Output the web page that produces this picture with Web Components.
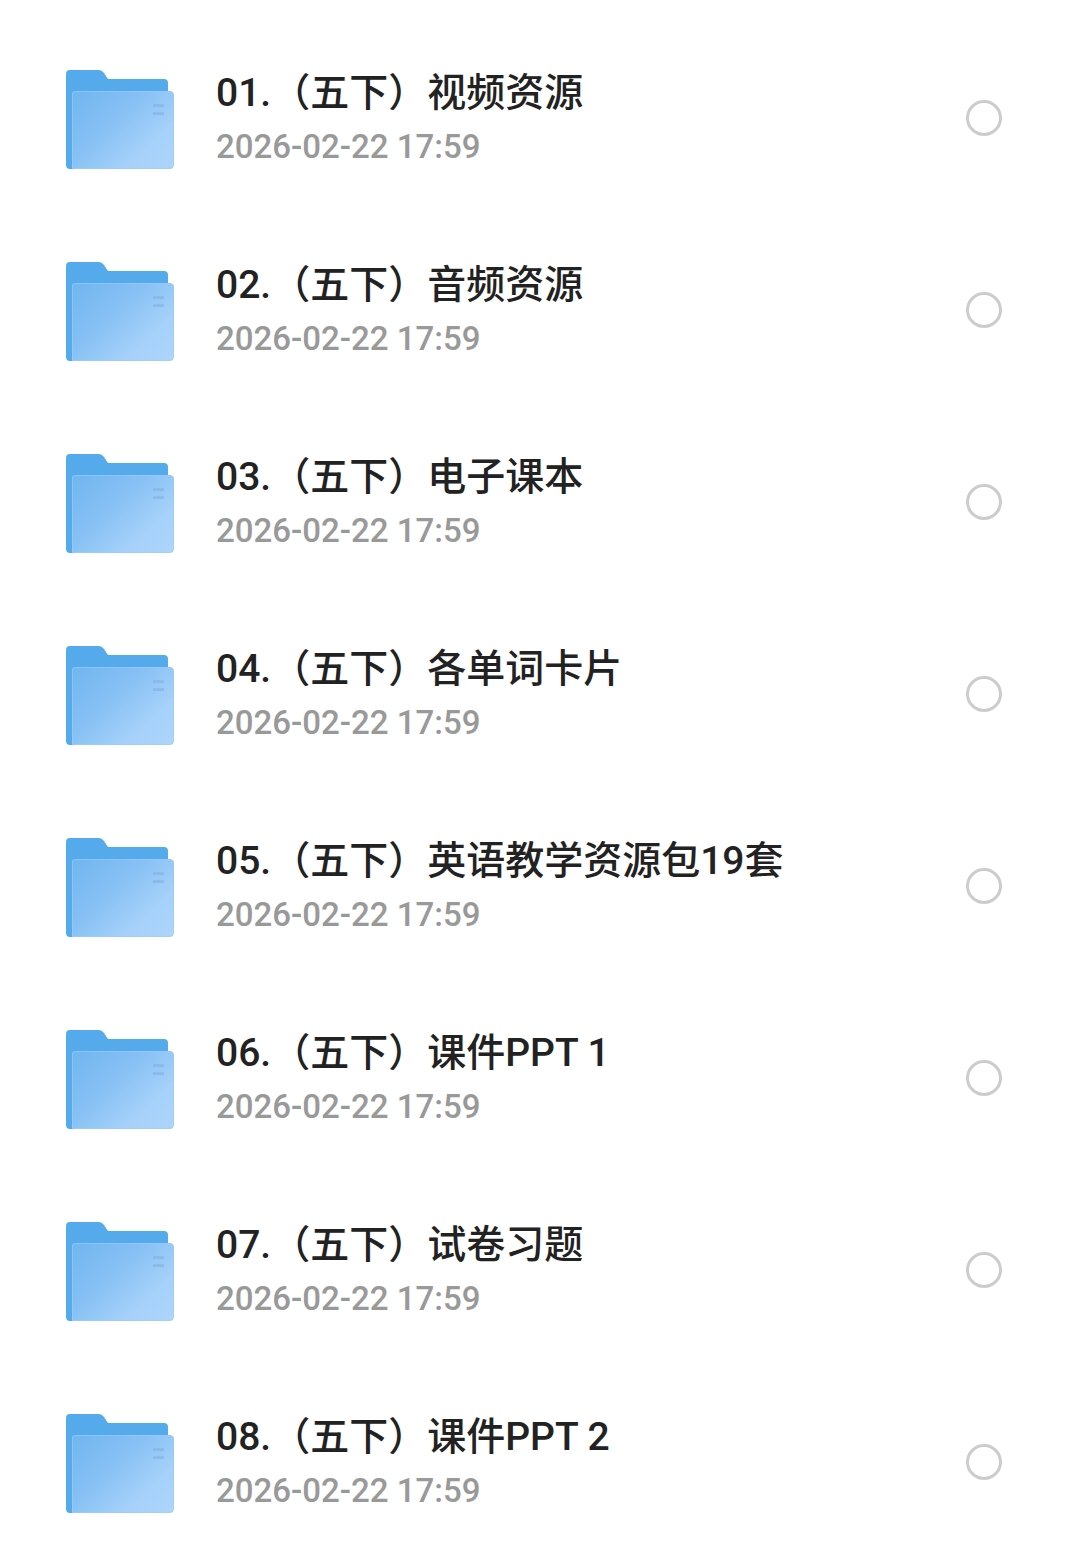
<!DOCTYPE html>
<html lang="zh-CN">
<head>
<meta charset="UTF-8">
<meta name="viewport" content="width=device-width, initial-scale=1">
<title>五下资源</title>
<style>
  body {
    margin: 0;
    background-color: #fff;
    font-family: Roboto, "Noto Sans CJK SC", sans-serif;
  }
</style>
</head>
<body>
<file-list></file-list>

<script>
class FolderIcon extends HTMLElement {
  constructor() {
    super();
    this.attachShadow({ mode: 'open' });
    this.shadowRoot.innerHTML = `
      <style>
        :host {
          display: block;
          width: 108px;
          height: 100px;
        }
        svg {
          display: block;
        }
      </style>
      <svg width="108" height="100" viewBox="0 0 108 100" aria-hidden="true">
        <defs>
          <linearGradient id="front" x1="0" y1="0.1" x2="1" y2="0.9">
            <stop offset="0" stop-color="#72b7f0"/>
            <stop offset="0.4" stop-color="#88c1f4"/>
            <stop offset="0.75" stop-color="#a5d1fa"/>
            <stop offset="1" stop-color="#acd4fb"/>
          </linearGradient>
          <linearGradient id="edge" x1="0" y1="0" x2="1" y2="1">
            <stop offset="0" stop-color="#86c5f6"/>
            <stop offset="1" stop-color="#a6d0f9"/>
          </linearGradient>
        </defs>
        <path fill="#55aaec" d="M4 0H33Q36 0 38 3L42 9H98Q102 9 102 13V99H4Q0 99 0 95V4Q0 0 4 0Z"/>
        <path fill="url(#front)" stroke="url(#edge)" d="M8.500 21.500H104Q107.500 21.500 107.500 25V95Q107.500 98.500 104 98.500H6.500V23.500Q6.500 21.500 8.500 21.500Z"/>
        <path fill="#84b8ea" fill-opacity="0.8" d="M87 34H98V37H87ZM87 42H98V45H87Z"/>
      </svg>
    `;
  }
}

class FileRow extends HTMLElement {
  constructor() {
    super();
    this.attachShadow({ mode: 'open' });
    this.shadowRoot.innerHTML = `
      <style>
        :host {
          display: block;
        }
        label {
          display: flex;
          align-items: center;
          height: 192px;
          padding: 0 78px 0 66px;
        }
        .info {
          flex: 1;
          min-width: 0;
          margin-left: 42px;
          font-weight: 500;
          line-height: 54px;
        }
        .title {
          font-size: 39px;
          color: #222;
        }
        .date {
          font-size: 33px;
          color: #999;
        }
        input {
          appearance: none;
          flex: none;
          box-sizing: border-box;
          width: 36px;
          height: 36px;
          margin: 0 0 4px;
          border: 3px solid #ccc;
          border-radius: 50%;
        }
        input:checked {
          border: 10px solid #55aaec;
        }
      </style>
      <label>
        <folder-icon></folder-icon>
        <div class="info">
          <div class="title"><slot></slot></div>
          <div class="date"><slot name="date"></slot></div>
        </div>
        <input type="checkbox">
      </label>
    `;
  }
}

class FileList extends HTMLElement {
  constructor() {
    super();
    this.attachShadow({ mode: 'open' });
    this.files = [
      '01.（五下）视频资源',
      '02.（五下）音频资源',
      '03.（五下）电子课本',
      '04.（五下）各单词卡片',
      '05.（五下）英语教学资源包19套',
      '06.（五下）课件PPT 1',
      '07.（五下）试卷习题',
      '08.（五下）课件PPT 2',
    ];
    this.render();
  }

  render() {
    this.shadowRoot.innerHTML = `
      <style>
        :host {
          display: block;
          padding-top: 24px;
        }
      </style>
      ${this.files.map((name) => this.getRow(name)).join('')}
    `;
  }

  getRow(name) {
    return `<file-row>${name}<time slot="date" datetime="2026-02-22T17:59">2026-02-22 17:59</time></file-row>`;
  }
}

customElements.define('folder-icon', FolderIcon);
customElements.define('file-row', FileRow);
customElements.define('file-list', FileList);
</script>
</body>
</html>
